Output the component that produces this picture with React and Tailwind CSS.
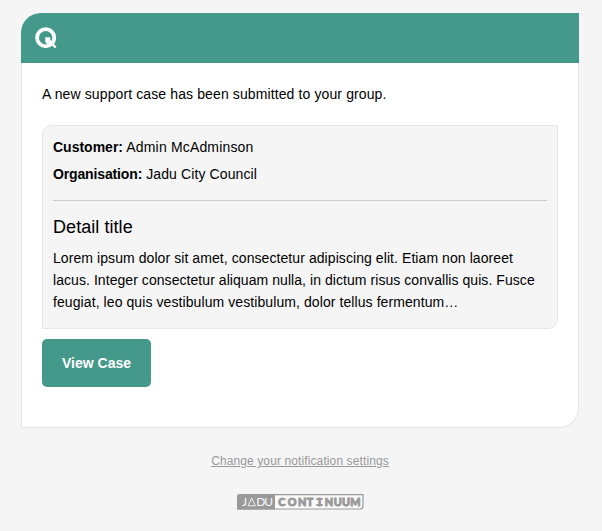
function QLogo() {
  return (
    <svg width="23" height="23" viewBox="0 0 23 23" fill="none" aria-label="Q">
      <circle cx="10.7" cy="10.7" r="8.6" stroke="#fff" strokeWidth="3.8" />
      <path d="M10.2 10.2h5v2.3l6.3 7.3-1.4 1.5-6-5-1.4 1.4-2.5-2.7z" fill="#fff" />
    </svg>
  );
}

function ContinuumLogo() {
  return (
    <svg width="127" height="17" viewBox="0 0 127 17" fontFamily="Lato, sans-serif">
      <path d="M3 1.6H126V13a3 3 0 0 1-3 3H.8V3.8A2.2 2.2 0 0 1 3 1.6Z" fill="#fafafa" stroke="#999" strokeWidth="1.2" />
      <path d="M3 1H38V16.6H0V4A3 3 0 0 1 3 1Z" fill="#999" />
      <path d="m11 12.8 3.7-7.7 3.7 7.7Z" fill="none" stroke="#fafafa" strokeWidth=".9" />
      <text x="4.9 19.2 27.2" y="13.2" fontSize="11.9" fill="#fafafa">JDU</text>
      <text x="41.3 50.7 61.1 69.8 80.9 87.7 96.7 105.1 113.3" y="12.7" fontSize="10.8" fontWeight="900" fill="#999" stroke="#999" strokeWidth=".9">CONTINUUM</text>
      <path d="M79.3 4.9h6.4v2h-6.4zM79.3 10.9h6.4v2h-6.4z" fill="#999" />
    </svg>
  );
}

export default function App() {
  return (
    <div className="flex min-h-screen flex-col items-center bg-[#f5f5f5] pt-[13px] font-['Liberation_Sans',Arial,sans-serif] text-sm text-black">
      <main className="mr-[2px] w-[558px]">
        <header className="h-[50px] rounded-tl-[20px] bg-[#44998a] pt-[14px] pl-[14px]">
          <QLogo />
        </header>
        <section className="h-[365px] rounded-br-[20px] border border-t-0 border-[#e6e6e6] bg-white px-5 pt-[21px]">
          <p className="leading-5 tracking-[0.115px]">A new support case has been submitted to your group.</p>
          <div className="mt-[21px] h-[204px] rounded-tl-[10px] rounded-br-[10px] border border-[#e6e6e6] bg-[#f5f5f5] px-[10px] pt-[11px]">
            <p className="leading-5"><b>Customer:</b><span className="tracking-[0.17px]"> Admin McAdminson</span></p>
            <p className="mt-[7px] leading-5"><b className="tracking-[-0.14px]">Organisation:</b><span className="tracking-[0.11px]"> Jadu City Council</span></p>
            <hr className="mt-[16px] border-[#ccc]" />
            <h2 className="mt-[14px] text-lg leading-6 tracking-[0.06px]">Detail title</h2>
            <p className="mt-[8px] leading-[22px] tracking-[0.075px] whitespace-nowrap">
              Lorem ipsum dolor sit amet, consectetur adipiscing elit. Etiam non laoreet<br />
              <span className="tracking-[0.06px]">lacus. Integer consectetur aliquam nulla, in dictum risus convallis quis. Fusce</span><br />
              <span className="tracking-[0.085px]">feugiat, leo quis vestibulum vestibulum, dolor tellus fermentum…</span>
            </p>
          </div>
          <button className="mt-[10px] h-12 w-[109px] rounded-[5px] bg-[#44998a] font-bold text-white">View Case</button>
        </section>
      </main>
      <a className="mr-[2px] mt-[23px] text-xs leading-5 tracking-[0.11px] text-[#999] underline">Change your notification settings</a>
      <div className="mr-[1px] mt-[22px]"><ContinuumLogo /></div>
    </div>
  );
}
